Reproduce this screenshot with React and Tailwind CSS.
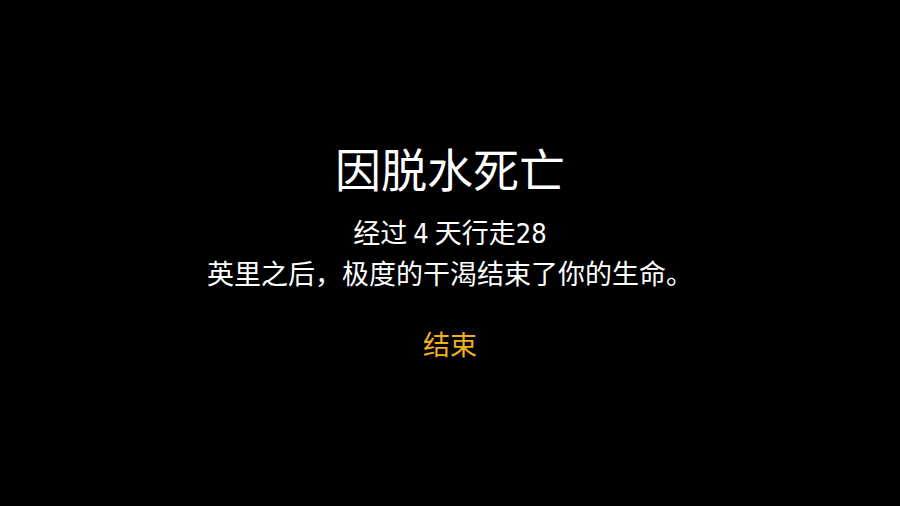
export default function App() {
  return (
    <div
      className="w-[900px] h-[506px] bg-black flex flex-col items-center text-white"
      style={{ fontFamily: '"Noto Sans CJK SC", "Noto Sans", sans-serif' }}
    >
      <div className="mt-[138px] text-[46px] leading-[58px] font-normal">因脱水死亡</div>
      <div className="mt-[16px] text-[27px] leading-[39px] text-center">
        <div>
          经过{' '}
          <span className="font-['DejaVu_Sans_Condensed','DejaVu_Sans',sans-serif] font-stretch-condensed">4</span>{' '}
          天行走
          <span className="font-['DejaVu_Sans_Condensed','DejaVu_Sans',sans-serif] font-stretch-condensed">28</span>
        </div>
        <div>英里之后，极度的干渴结束了你的生命。</div>
      </div>
      <div className="mt-[34px] text-[27px] leading-[36px] text-[#f2b01e]">结束</div>
    </div>
  );
}
